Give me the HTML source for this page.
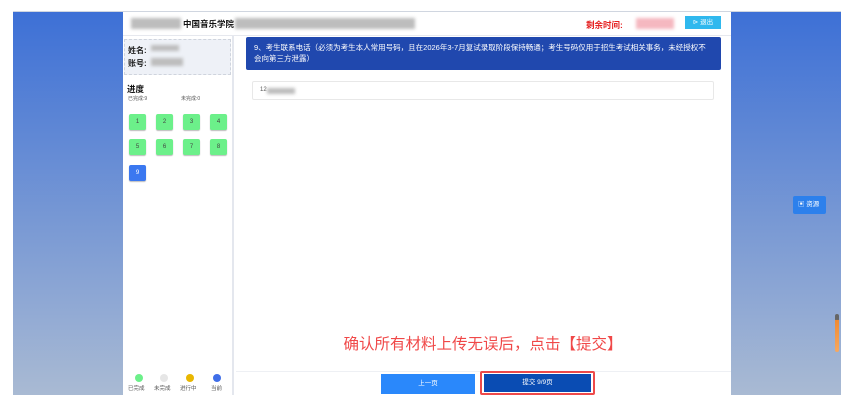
<!DOCTYPE html>
<html><head><meta charset="utf-8"><style>
*{margin:0;padding:0;box-sizing:border-box}
body{width:846px;height:411px;background:#fff;position:relative;overflow:hidden;font-family:"Liberation Sans","Noto Sans CJK SC",sans-serif;}
.bg{position:absolute;left:13px;top:11px;width:828px;height:384px;background:linear-gradient(#3d70d6,#a9bad3);border-top:1px solid #d0d6e0}
.page{position:absolute;left:123px;top:12px;width:608px;height:383px;background:#fff}
.hdr{position:absolute;left:0;top:0;width:608px;height:24px;border-bottom:1px solid #e6e8ee}
.blur{position:absolute;background:#bdbdbd;filter:blur(1.5px)}
.side{position:absolute;left:0;top:24px;width:111px;height:359px;border-right:2px solid #e4e7ee}
.info{position:absolute;left:1px;top:3px;width:107px;height:36px;background:#eef1f7;border:1px dashed #cfd4dd;font-size:8px;font-weight:bold;color:#222;padding:4px 3px;line-height:13px}
.nb{position:absolute;width:17px;height:16px;background:#6cf08a;border-radius:2px;font-size:6px;color:#444;text-align:center;line-height:16px;box-shadow:0 1px 1px #bbb}
.q{position:absolute;left:123px;top:25px;width:475px;height:33px;background:#2048ae;border-radius:2px;color:#fff;font-size:7.5px;line-height:11px;padding:5px 8px}
.inp{position:absolute;left:129px;top:69px;width:462px;height:19px;border:1px solid #e8e8e8;border-radius:2px;font-size:6px;color:#555;padding:5px 7px}
.dot{position:absolute;width:8px;height:8px;border-radius:50%}
.lg{position:absolute;font-size:5.5px;color:#555;top:372px}
</style></head><body>
<div class="bg"></div>
<div class="page">
 <div class="hdr">
  <div class="blur" style="left:8px;top:6px;width:50px;height:11px"></div>
  <div style="position:absolute;left:60px;top:6px;font-size:8.5px;font-weight:bold;color:#111">中国音乐学院</div>
  <div class="blur" style="left:112px;top:6px;width:180px;height:11px"></div>
  <div style="position:absolute;left:463px;top:7px;font-size:8.5px;font-weight:bold;color:#e52020">剩余时间:</div>
  <div class="blur" style="left:513px;top:6px;width:38px;height:11px;background:#f5b8c0"></div>
  <div style="position:absolute;left:562px;top:4px;width:36px;height:13px;background:#2fb8ee;color:#fff;font-size:6.5px;text-align:center;line-height:13px">⊳ 退出</div>
 </div>
 <div class="side">
  <div class="info">姓名:<br>账号:</div>
  <div class="blur" style="left:28px;top:9px;width:28px;height:6px"></div>
  <div class="blur" style="left:28px;top:22px;width:32px;height:8px"></div>
  <div style="position:absolute;left:4px;top:47px;font-size:8.5px;font-weight:bold;color:#111">进度</div>
  <div style="position:absolute;left:5px;top:59px;font-size:5px;color:#555">已完成:9</div>
  <div style="position:absolute;left:58px;top:59px;font-size:5px;color:#555">未完成:0</div>
  <div class="nb" style="left:6px;top:78px">1</div><div class="nb" style="left:33px;top:78px">2</div><div class="nb" style="left:60px;top:78px">3</div><div class="nb" style="left:87px;top:78px">4</div>
  <div class="nb" style="left:6px;top:103px">5</div><div class="nb" style="left:33px;top:103px">6</div><div class="nb" style="left:60px;top:103px">7</div><div class="nb" style="left:87px;top:103px">8</div>
  <div class="nb" style="left:6px;top:129px;background:#3b78f0;color:#fff">9</div>
 </div>
 <div class="dot" style="left:12px;top:362px;background:#6cf08a"></div>
 <div class="dot" style="left:37px;top:362px;background:#e6e6e6"></div>
 <div class="dot" style="left:63px;top:362px;background:#e9b700"></div>
 <div class="dot" style="left:90px;top:362px;background:#3f6ee8"></div>
 <div class="lg" style="left:5px">已完成</div><div class="lg" style="left:31px">未完成</div><div class="lg" style="left:57px">进行中</div><div class="lg" style="left:88px">当前</div>
 <div class="q">9、考生联系电话（必须为考生本人常用号码，且在2026年3-7月复试录取阶段保持畅通；考生号码仅用于招生考试相关事务，未经授权不会向第三方泄露）</div>
 <div class="inp">12</div>
 <div class="blur" style="left:144px;top:76px;width:28px;height:6px"></div>
 <div style="position:absolute;left:112px;top:320px;width:496px;text-align:center;font-size:15.5px;color:#f04848">确认所有材料上传无误后，点击【提交】</div>
 <div style="position:absolute;left:113px;top:359px;width:495px;border-top:1px solid #eef0f4"></div>
 <div style="position:absolute;left:258px;top:362px;width:94px;height:20px;background:#2a88fb;color:#fff;font-size:6.5px;text-align:center;line-height:20px">上一页</div>
 <div style="position:absolute;left:357px;top:359px;width:115px;height:24px;border:2px solid #ee4a4a;border-radius:2px"></div>
 <div style="position:absolute;left:361px;top:362px;width:107px;height:18px;background:#0a4cb3;color:#fff;font-size:6.5px;text-align:center;line-height:18px">提交 9/9页</div>
</div>
<div style="position:absolute;left:793px;top:196px;width:33px;height:18px;background:#2c80ec;border-radius:2px;color:#fff;font-size:6.5px;line-height:18px;padding-left:5px">▣ 资源</div>
<div style="position:absolute;left:835px;top:314px;width:4px;height:38px;border-radius:2px;background:linear-gradient(#666 0,#666 15%,#f08a30 16%,#f6a860)"></div>
</body></html>
